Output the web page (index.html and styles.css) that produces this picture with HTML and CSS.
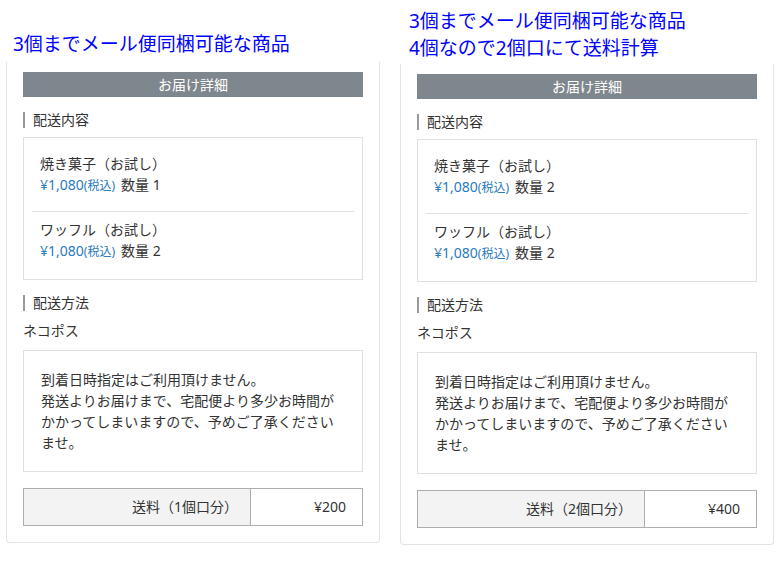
FILE: index.html
```html
<!DOCTYPE html>
<html lang="ja">
<head>
    <meta charset="UTF-8">
    <meta name="viewport" content="width=device-width, initial-scale=1.0">
    <title>お届け詳細</title>
    <link rel="stylesheet" href="styles.css">
</head>
<body>
    <div class="page">

        <!-- 1個口のケース -->
        <div class="col">
            <p class="note">3個までメール便同梱可能な商品</p>
            <div class="card">
                <div class="card-title">お届け詳細</div>

                <h3 class="section-title">配送内容</h3>
                <div class="items">
                    <div class="item">
                        <div class="item-name">焼き菓子（お試し）</div>
                        <div class="item-price">
                            <span class="price">¥1,080<small>(税込)</small></span>
                            <span class="qty">数量 1</span>
                        </div>
                    </div>
                    <div class="item">
                        <div class="item-name">ワッフル（お試し）</div>
                        <div class="item-price">
                            <span class="price">¥1,080<small>(税込)</small></span>
                            <span class="qty">数量 2</span>
                        </div>
                    </div>
                </div>

                <h3 class="section-title">配送方法</h3>
                <p class="method">ネコポス</p>
                <div class="notice">
                    到着日時指定はご利用頂けません。<br>
                    発送よりお届けまで、宅配便より多少お時間がかかってしまいますので、予めご了承くださいませ。
                </div>

                <div class="fee">
                    <div class="fee-label">送料（1個口分）</div>
                    <div class="fee-value">¥200</div>
                </div>
            </div>
        </div>

        <!-- 2個口のケース -->
        <div class="col">
            <p class="note note--two">3個までメール便同梱可能な商品<br>4個なので2個口にて送料計算</p>
            <div class="card">
                <div class="card-title">お届け詳細</div>

                <h3 class="section-title">配送内容</h3>
                <div class="items">
                    <div class="item">
                        <div class="item-name">焼き菓子（お試し）</div>
                        <div class="item-price">
                            <span class="price">¥1,080<small>(税込)</small></span>
                            <span class="qty">数量 2</span>
                        </div>
                    </div>
                    <div class="item">
                        <div class="item-name">ワッフル（お試し）</div>
                        <div class="item-price">
                            <span class="price">¥1,080<small>(税込)</small></span>
                            <span class="qty">数量 2</span>
                        </div>
                    </div>
                </div>

                <h3 class="section-title">配送方法</h3>
                <p class="method">ネコポス</p>
                <div class="notice">
                    到着日時指定はご利用頂けません。<br>
                    発送よりお届けまで、宅配便より多少お時間がかかってしまいますので、予めご了承くださいませ。
                </div>

                <div class="fee">
                    <div class="fee-label">送料（2個口分）</div>
                    <div class="fee-value">¥400</div>
                </div>
            </div>
        </div>

    </div>
</body>
</html>
```

FILE: styles.css
```css
/* Основные стили */
body {
    margin: 0;
    background: #fff;
    color: #333;
    font-family: "Noto Sans", "Noto Sans CJK JP", sans-serif;
    font-size: 14px;
    line-height: 21px;
}
.page {
    display: flex;
    gap: 20px;
    padding-left: 6px;
}
.col {
    width: 374px;
    display: flex;
    flex-direction: column;
}

/* Пометка над карточкой */
.note {
    margin: 31px 0 4px;
    padding-left: 7px;
    color: #0000ff;
    font-size: 19px;
    line-height: 27px;
}
.note--two {
    margin: 8px 0 2px;
    padding-left: 9px;
}

/* Карточка */
.card {
    border: 1px solid #e3e3e3;
    border-top: none;
    border-radius: 0 0 4px 4px;
    padding: 10px 16px 16px;
}
.card-title {
    background: #7f878e;
    color: #fff;
    text-align: center;
    height: 25px;
    line-height: 25px;
}
.section-title {
    margin: 15px 0 9px;
    padding-left: 8px;
    border-left: 2px solid #999;
    font-size: 14px;
    font-weight: normal;
    line-height: 16px;
}

/* Товары */
.items {
    border: 1px solid #e0e0e0;
    padding: 8px 8px 2px;
}
.item {
    padding: 7px 8px 16px;
}
.item + .item {
    border-top: 1px solid #e0e0e0;
}
.item-name,
.item-price {
    height: 21px;
}
.item-price {
    display: flex;
    gap: 6px;
}
.price {
    color: #2b7bc0;
}
.price small {
    font-size: 12px;
}

/* Способ доставки */
.method {
    margin: 0 0 9px;
    height: 21px;
}
.notice {
    border: 1px solid #e0e0e0;
    padding: 18px 17px;
}

/* Стоимость доставки */
.fee {
    display: grid;
    grid-template-columns: 227px 1fr;
    margin-top: 16px;
    border: 1px solid #adadad;
    height: 36px;
}
.fee-label,
.fee-value {
    text-align: right;
    line-height: 36px;
}
.fee-label {
    background: #f3f3f3;
    border-right: 1px solid #adadad;
    padding-right: 12px;
}
.fee-value {
    padding-right: 16px;
}
```
